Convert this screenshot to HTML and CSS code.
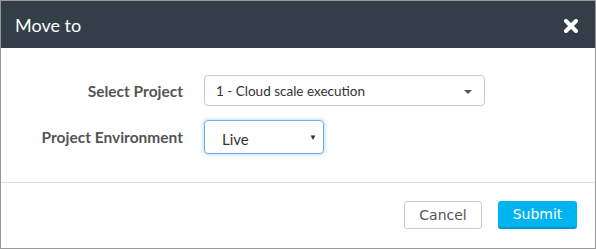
FILE: index.html
```html
<!DOCTYPE html>
<html lang="en">
<head>
  <meta charset="UTF-8" />
  <title>Move to</title>
  <link rel="stylesheet" href="styles.css">
</head>
<body>
  <div class="modal">
    <div class="modal-header">
      <h4 class="modal-title">Move to</h4>
      <button class="close" aria-label="Close">
        <svg viewBox="0 0 14 14" width="14" height="14">
          <path d="M2 2 L12 12 M12 2 L2 12" stroke="#fff" stroke-width="4" stroke-linecap="round"/>
        </svg>
      </button>
    </div>

    <div class="modal-body">
      <div class="form-row">
        <label>Select Project</label>
        <div class="select select-wide">
          <span>1 - Cloud scale execution</span>
          <span class="caret"></span>
        </div>
      </div>
      <div class="form-row">
        <label>Project Environment</label>
        <div class="select select-small focus">
          <span>Live</span>
          <span class="arrow">&#9660;</span>
        </div>
      </div>
    </div>

    <div class="modal-footer">
      <button class="btn btn-default">Cancel</button>
      <button class="btn btn-primary">Submit</button>
    </div>
  </div>
</body>
</html>
```

FILE: styles.css
```css
* {
  margin: 0;
  padding: 0;
  box-sizing: border-box;
}

body {
  font-family: Lato, 'Open Sans', sans-serif;
  background: #fff;
}

.modal {
  width: 596px;
  height: 249px;
  border: 1px solid #999;
  display: flex;
  flex-direction: column;
}

.modal-header {
  background: #333e49;
  height: 47px;
  display: flex;
  align-items: center;
  justify-content: space-between;
  padding: 0 17px 0 14px;
}

.modal-title {
  color: #fff;
  font-size: 18px;
  font-weight: 400;
}

.close {
  background: none;
  border: none;
  display: flex;
  margin-top: 2px;
}

.modal-body {
  padding: 27px 0 28px;
  display: flex;
  flex-direction: column;
  gap: 14px;
  border-bottom: 1px solid #ddd;
}

.form-row {
  display: grid;
  grid-template-columns: 182px auto;
  column-gap: 21px;
  align-items: center;
}

.form-row label {
  text-align: right;
  font-weight: 700;
  font-size: 15.5px;
  color: #555;
}

.select {
  display: flex;
  align-items: center;
  justify-content: space-between;
  border: 1px solid #ccc;
  border-radius: 4px;
  color: #333;
  font-size: 13.5px;
}

.select-wide {
  width: 281px;
  height: 31px;
  padding: 0 12px 0 11px;
}

.select-small {
  width: 120px;
  height: 34px;
  padding: 3px 6px 0 17px;
  font-size: 15px;
}

.select.focus {
  border-color: #66afe9;
  box-shadow: 0 0 4px rgba(102, 175, 233, 0.6);
}

.caret {
  width: 0;
  height: 0;
  border-left: 4px solid transparent;
  border-right: 4px solid transparent;
  border-top: 4px solid #555;
  margin-top: 2px;
}

.arrow {
  font-size: 8px;
  color: #333;
  margin-top: -4px;
}

.modal-footer {
  flex: 1;
  display: flex;
  justify-content: flex-end;
  gap: 16px;
  padding: 18px 18px 0 0;
}

.btn {
  height: 28px;
  border-radius: 3px;
  font-family: 'DejaVu Sans', Verdana, sans-serif;
  font-size: 14px;
  cursor: pointer;
}

.btn-default {
  width: 78px;
  background: #fff;
  border: 1px solid #ccc;
  color: #555;
}

.btn-primary {
  width: 79px;
  background: #00b5ef;
  border: none;
  border-bottom: 2px solid #0098cc;
  color: #fff;
}
```
